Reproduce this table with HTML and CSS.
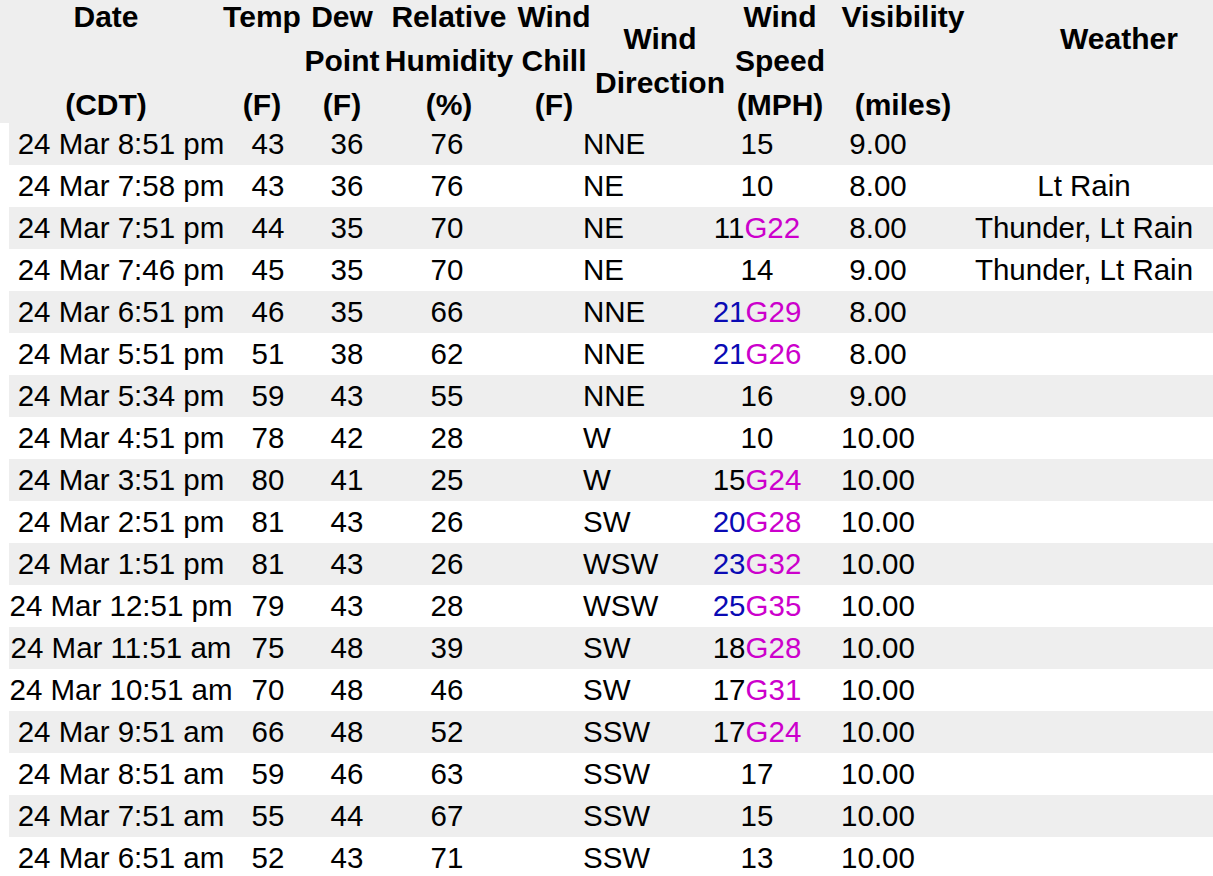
FILE: index.html
```html
<!DOCTYPE html>
<html>
<head>
<meta charset="utf-8">
<title>Observations</title>
<link rel="stylesheet" href="styles.css">
</head>
<body>
<div class="obs">
  <div class="head">
    <div class="head-grid">
      <div class="hc">Date<br>&nbsp;<br>(CDT)</div>
      <div class="hc">Temp<br>&nbsp;<br>(F)</div>
      <div class="hc">Dew<br>Point<br>(F)</div>
      <div class="hc">Relative<br>Humidity<br>(%)</div>
      <div class="hc">Wind<br>Chill<br>(F)</div>
      <div class="hc mid">Wind<br>Direction</div>
      <div class="hc">Wind<br>Speed<br>(MPH)</div>
      <div class="hc">Visibility<br>&nbsp;<br>(miles)</div>
      <div class="hc mid weather-h">Weather<br>&nbsp;</div>
    </div>
  </div>
  <div class="body">
    <div class="row"><span>24 Mar 8:51 pm</span><span>43</span><span>36</span><span>76</span><span></span><span class="dir">NNE</span><span>15</span><span class="vis">9.00</span><span></span></div>
    <div class="row"><span>24 Mar 7:58 pm</span><span>43</span><span>36</span><span>76</span><span></span><span class="dir">NE</span><span>10</span><span class="vis">8.00</span><span>Lt Rain</span></div>
    <div class="row"><span>24 Mar 7:51 pm</span><span>44</span><span>35</span><span>70</span><span></span><span class="dir">NE</span><span>11<em class="g">G22</em></span><span class="vis">8.00</span><span>Thunder, Lt Rain</span></div>
    <div class="row"><span>24 Mar 7:46 pm</span><span>45</span><span>35</span><span>70</span><span></span><span class="dir">NE</span><span>14</span><span class="vis">9.00</span><span>Thunder, Lt Rain</span></div>
    <div class="row"><span>24 Mar 6:51 pm</span><span>46</span><span>35</span><span>66</span><span></span><span class="dir">NNE</span><span><em class="b">21</em><em class="g">G29</em></span><span class="vis">8.00</span><span></span></div>
    <div class="row"><span>24 Mar 5:51 pm</span><span>51</span><span>38</span><span>62</span><span></span><span class="dir">NNE</span><span><em class="b">21</em><em class="g">G26</em></span><span class="vis">8.00</span><span></span></div>
    <div class="row"><span>24 Mar 5:34 pm</span><span>59</span><span>43</span><span>55</span><span></span><span class="dir">NNE</span><span>16</span><span class="vis">9.00</span><span></span></div>
    <div class="row"><span>24 Mar 4:51 pm</span><span>78</span><span>42</span><span>28</span><span></span><span class="dir">W</span><span>10</span><span class="vis">10.00</span><span></span></div>
    <div class="row"><span>24 Mar 3:51 pm</span><span>80</span><span>41</span><span>25</span><span></span><span class="dir">W</span><span>15<em class="g">G24</em></span><span class="vis">10.00</span><span></span></div>
    <div class="row"><span>24 Mar 2:51 pm</span><span>81</span><span>43</span><span>26</span><span></span><span class="dir">SW</span><span><em class="b">20</em><em class="g">G28</em></span><span class="vis">10.00</span><span></span></div>
    <div class="row"><span>24 Mar 1:51 pm</span><span>81</span><span>43</span><span>26</span><span></span><span class="dir">WSW</span><span><em class="b">23</em><em class="g">G32</em></span><span class="vis">10.00</span><span></span></div>
    <div class="row"><span>24 Mar 12:51 pm</span><span>79</span><span>43</span><span>28</span><span></span><span class="dir">WSW</span><span><em class="b">25</em><em class="g">G35</em></span><span class="vis">10.00</span><span></span></div>
    <div class="row"><span>24 Mar 11:51 am</span><span>75</span><span>48</span><span>39</span><span></span><span class="dir">SW</span><span>18<em class="g">G28</em></span><span class="vis">10.00</span><span></span></div>
    <div class="row"><span>24 Mar 10:51 am</span><span>70</span><span>48</span><span>46</span><span></span><span class="dir">SW</span><span>17<em class="g">G31</em></span><span class="vis">10.00</span><span></span></div>
    <div class="row"><span>24 Mar 9:51 am</span><span>66</span><span>48</span><span>52</span><span></span><span class="dir">SSW</span><span>17<em class="g">G24</em></span><span class="vis">10.00</span><span></span></div>
    <div class="row"><span>24 Mar 8:51 am</span><span>59</span><span>46</span><span>63</span><span></span><span class="dir">SSW</span><span>17</span><span class="vis">10.00</span><span></span></div>
    <div class="row"><span>24 Mar 7:51 am</span><span>55</span><span>44</span><span>67</span><span></span><span class="dir">SSW</span><span>15</span><span class="vis">10.00</span><span></span></div>
    <div class="row"><span>24 Mar 6:51 am</span><span>52</span><span>43</span><span>71</span><span></span><span class="dir">SSW</span><span>13</span><span class="vis">10.00</span><span></span></div>
  </div>
</div>
</body>
</html>
```

FILE: styles.css
```css
html, body {
  margin: 0;
  padding: 0;
  background: #ffffff;
}

body {
  font-family: "Liberation Sans", Arial, sans-serif;
  color: #000000;
  overflow: hidden;
}

.obs {
  width: 1213px;
}

.head {
  height: 123px;
  background: #eeeeee;
  overflow: hidden;
}

.head-grid {
  margin-top: -5px;
  display: grid;
  grid-template-columns: 212px 100px 60px 154px 56px 156px 84px 162px 229px;
  font-weight: bold;
  font-size: 30px;
  line-height: 44px;
}

.hc {
  text-align: center;
  white-space: nowrap;
  height: 132px;
  display: flex;
  flex-direction: column;
  justify-content: flex-start;
  align-items: center;
}

.hc.mid {
  justify-content: center;
}

.weather-h {
  padding-left: 41px;
}

.body {
  margin-left: 9px;
}

.row {
  display: grid;
  grid-template-columns: 224px 70px 88px 112px 76px 111px 134px 131px 258px;
  height: 42px;
  font-size: 29.5px;
  line-height: 42px;
}

.row:nth-child(odd) {
  background: #eeeeee;
}

.row span {
  text-align: center;
  white-space: nowrap;
}

.row span.dir {
  text-align: left;
  padding-left: 4px;
}

.row span.vis {
  padding-right: 23px;
}

.row em {
  font-style: normal;
}

.row em.b {
  color: #0a0ab4;
}

.row em.g {
  color: #cc00cc;
}
```
